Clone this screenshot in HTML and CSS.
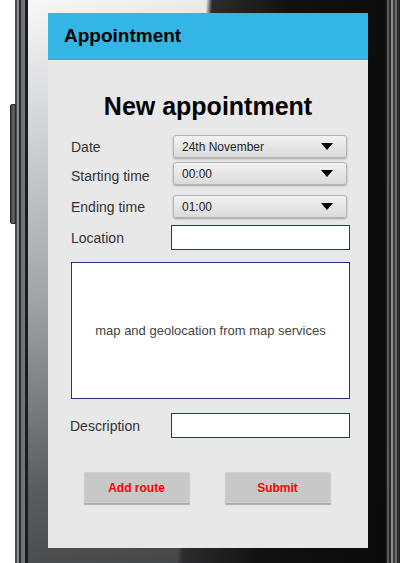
FILE: index.html
```html
<!DOCTYPE html>
<html lang="en">
<head>
    <meta charset="UTF-8">
    <meta name="viewport" content="width=device-width, initial-scale=1.0">
    <title>Appointment</title>
    <link rel="stylesheet" href="styles.css">
</head>
<body>
    <div class="device">
        <div class="side-key"></div>
        <div class="edge edge-left"></div>
        <div class="bezel">
            <div class="screen">
                <div class="app-bar">Appointment</div>

                <h1 class="page-title">New appointment</h1>

                <div class="form">
                    <div class="row row-date">
                        <span class="label">Date</span>
                        <div class="select">
                            <span>24th November</span>
                            <svg width="12" height="7" viewBox="0 0 12 7"><path d="M0 0h12L6 7z" fill="#000"/></svg>
                        </div>
                    </div>
                    <div class="row row-start">
                        <span class="label">Starting time</span>
                        <div class="select">
                            <span>00:00</span>
                            <svg width="12" height="7" viewBox="0 0 12 7"><path d="M0 0h12L6 7z" fill="#000"/></svg>
                        </div>
                    </div>
                    <div class="row row-end">
                        <span class="label">Ending time</span>
                        <div class="select">
                            <span>01:00</span>
                            <svg width="12" height="7" viewBox="0 0 12 7"><path d="M0 0h12L6 7z" fill="#000"/></svg>
                        </div>
                    </div>
                    <div class="row row-location">
                        <span class="label">Location</span>
                        <div class="input"></div>
                    </div>

                    <div class="map">map and geolocation from map services</div>

                    <div class="row row-description">
                        <span class="label label-desc">Description</span>
                        <div class="input"></div>
                    </div>

                    <div class="actions">
                        <button class="btn">Add route</button>
                        <button class="btn">Submit</button>
                    </div>
                </div>
            </div>
        </div>
        <div class="edge edge-right"></div>
    </div>
</body>
</html>
```

FILE: styles.css
```css
html, body {
    margin: 0;
    padding: 0;
    background: #fff;
    overflow: hidden;
    font-family: "Liberation Sans", Arial, sans-serif;
}

.device {
    position: relative;
    display: flex;
    width: 385px;
    height: 563px;
    margin-left: 15px;
}

/* volume key on the left side */
.side-key {
    position: absolute;
    left: -5px;
    top: 104px;
    width: 4px;
    height: 118px;
    background: linear-gradient(to right, #3a3a3a, #6a6a6a 60%, #444);
    border: 1px solid #2a2a2a;
    border-radius: 2px 0 0 2px;
}

.edge {
    flex: none;
    height: 100%;
}

.edge-left {
    width: 13px;
    background: linear-gradient(to right,
        #4a4b4d 0, #4a4b4d 2px,
        #8a8b8d 2px, #8a8b8d 4px,
        #2a2a2c 4px, #2a2a2c 6px,
        #6a6b6e 6px, #77787b 10px,
        #1c1c1d 10px, #1c1c1d 13px);
}

.edge-right {
    width: 15px;
    background: linear-gradient(to right,
        #101010 0, #1e1e1e 2px,
        #5a5a5c 2px, #5a5a5c 4px,
        #2a2a2a 4px, #2a2a2a 6px,
        #8c8c8e 6px, #8c8c8e 8px,
        #3c3c3e 8px, #3c3c3e 10px,
        #6e6e70 10px, #6e6e70 12px,
        #2a2a2a 12px, #2a2a2a 15px);
}

.bezel {
    flex: 1;
    padding: 13px 17px 15px 20px;
    background:
        linear-gradient(93deg, rgba(0, 0, 0, 0) 178px, #2c2c2e 184px, #121212 260px, #0a0a0a 100%),
        linear-gradient(165deg, #f8f8f8 0%, #d2d3d5 20%, #a3a5a8 45%, #5a5b5e 75%, #3a3b3d 100%);
}

.screen {
    width: 320px;
    height: 535px;
    background: #e8e8e8;
}

.app-bar {
    height: 46px;
    line-height: 46px;
    padding-left: 16px;
    background: #33b5e5;
    border-bottom: 1px solid #3aa8d4;
    color: #000;
    font-size: 19px;
    font-weight: bold;
}

.page-title {
    margin: 32px 0 0;
    height: 28px;
    line-height: 28px;
    text-align: center;
    font-size: 25px;
    font-weight: bold;
    color: #000;
}

.form {
    padding: 0 18px 0 23px;
}

.row {
    display: flex;
    align-items: center;
}

.label {
    width: 102px;
    font-size: 14px;
    color: #333;
}

.select {
    display: flex;
    align-items: center;
    justify-content: space-between;
    box-sizing: border-box;
    width: 174px;
    height: 23px;
    padding: 0 13px 0 8px;
    background: linear-gradient(#f2f2f2, #dadada);
    border: 1px solid #b4b4b4;
    border-radius: 3px;
    box-shadow: 0 1px 2px rgba(0, 0, 0, 0.3);
    font-size: 12px;
    color: #222;
}

.input {
    box-sizing: border-box;
    width: 179px;
    height: 25px;
    margin-left: -2px;
    background: #fff;
    border: 1px solid #1f3580;
}

.row-date { margin-top: 15px; }
.row-start { margin-top: 4px; }
.row-start .label { position: relative; top: 2px; }
.row-end { margin-top: 10px; }
.row-location { margin-top: 7px; }

.map {
    display: flex;
    align-items: center;
    justify-content: center;
    box-sizing: border-box;
    height: 137px;
    margin-top: 12px;
    background: #fff;
    border: 1px solid #1f3580;
    font-size: 13px;
    color: #444;
}

.row-description { margin-top: 14px; }
.label-desc { margin-left: -1px; width: 103px; }

.actions {
    display: flex;
    justify-content: center;
    gap: 35px;
    margin: 34px 0 0 -7px;
}

.btn {
    width: 106px;
    height: 31px;
    padding: 0;
    background: #c8c8c8;
    border: 1px solid #cfcfcf;
    border-radius: 1px;
    box-shadow: 0 2px 1px rgba(0, 0, 0, 0.25);
    color: #ff0000;
    font-family: "Liberation Sans", Arial, sans-serif;
    font-size: 12px;
    font-weight: bold;
}
```
